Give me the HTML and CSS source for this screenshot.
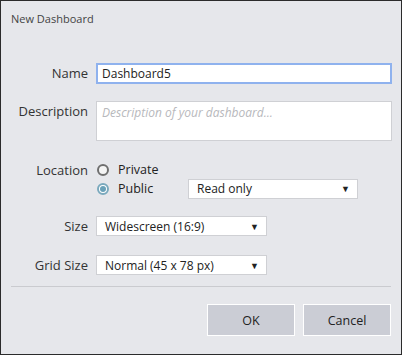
FILE: index.html
```html
<!DOCTYPE html>
<html lang="en">
<head>
    <meta charset="UTF-8">
    <title>New Dashboard</title>
    <link rel="stylesheet" href="styles.css">
</head>
<body>
    <div class="dialog">
        <div class="dialog-title">New Dashboard</div>

        <div class="form">
            <div class="row row-name">
                <label class="label">Name</label>
                <div class="field input focused">Dashboard5</div>
            </div>

            <div class="row row-desc">
                <label class="label">Description</label>
                <div class="field textarea placeholder">Description of your dashboard...</div>
            </div>

            <div class="row row-location">
                <label class="label">Location</label>
                <div class="location">
                    <div class="radio-line">
                        <span class="radio"></span>
                        <span class="radio-text">Private</span>
                    </div>
                    <div class="radio-line">
                        <span class="radio checked"></span>
                        <span class="radio-text">Public</span>
                        <div class="select select-access">
                            <span>Read only</span>
                            <span class="arrow">&#9660;</span>
                        </div>
                    </div>
                </div>
            </div>

            <div class="row row-size">
                <label class="label">Size</label>
                <div class="select select-small">
                    <span>Widescreen (16:9)</span>
                    <span class="arrow">&#9660;</span>
                </div>
            </div>

            <div class="row row-grid">
                <label class="label">Grid Size</label>
                <div class="select select-small">
                    <span>Normal (45 x 78 px)</span>
                    <span class="arrow">&#9660;</span>
                </div>
            </div>
        </div>

        <div class="separator"></div>

        <div class="buttons">
            <button class="btn">OK</button>
            <button class="btn">Cancel</button>
        </div>
    </div>
</body>
</html>
```

FILE: styles.css
```css
:root {
    --bg-color: #e6e7eb;
    --border-dark: #2b2b2b;
    --field-border: #cfd0d4;
    --focus-border: #8fb2ee;
    --text-color: #222;
    --button-color: #cbcdd5;
}

* {
    margin: 0;
    padding: 0;
    box-sizing: border-box;
    font-family: 'Open Sans', 'Noto Sans', Arial, sans-serif;
}

body {
    width: 402px;
    height: 355px;
    background: var(--bg-color);
    color: var(--text-color);
    font-size: 12px;
}

.dialog {
    height: 355px;
    border: 1px solid var(--border-dark);
    background: var(--bg-color);
    position: relative;
}

.dialog-title {
    padding: 10px 0 0 10px;
    height: 62px;
    font-size: 11px;
    color: #444;
}

.form {
    display: flex;
    flex-direction: column;
}

.row {
    display: flex;
    align-items: flex-start;
}

.label {
    width: 95px;
    padding-right: 8px;
    text-align: right;
    line-height: 21px;
    font-size: 13px;
    color: #333;
}

.field {
    background: #fff;
    border: 1px solid var(--field-border);
    width: 296px;
    padding: 0 5px;
    line-height: 19px;
}

.input {
    height: 21px;
}

.focused {
    border: 2px solid var(--focus-border);
    padding: 0 4px;
    line-height: 17px;
}

.textarea {
    height: 40px;
    padding-top: 1px;
}

.placeholder {
    color: #b7b8bc;
    font-style: italic;
}

.row-desc {
    margin-top: 17px;
}

.row-location {
    margin-top: 19px;
}

.location {
    display: flex;
    flex-direction: column;
}

.radio-line {
    display: flex;
    align-items: center;
    height: 19px;
}

.radio {
    width: 12px;
    height: 12px;
    border-radius: 50%;
    border: 2px solid #6f6f6f;
    background: #f4f4f4;
    margin: 0 9px 0 1px;
    position: relative;
}

.radio.checked {
    border-color: #7aa9bd;
    background: #fff;
}

.radio.checked::after {
    content: "";
    position: absolute;
    left: 1px;
    top: 1px;
    width: 6px;
    height: 6px;
    border-radius: 50%;
    background: #6aa1b8;
}

.radio-text {
    width: 70px;
    font-size: 12.5px;
}

.select {
    display: flex;
    justify-content: space-between;
    align-items: center;
    background: #fff;
    border: 1px solid var(--field-border);
    height: 20px;
    padding: 0 5px 0 8px;
}

.select-access {
    width: 170px;
    margin-left: 0;
}

.select-small {
    width: 171px;
}

.arrow {
    font-size: 9px;
    color: #222;
    padding-right: 2px;
}

.row-size {
    margin-top: 18px;
}

.row-grid {
    margin-top: 18px;
}

.separator {
    margin: 10px 10px 0 10px;
    height: 1px;
    background: #cacbcf;
}

.buttons {
    display: flex;
    justify-content: flex-end;
    gap: 8px;
    padding: 17px 10px 0 0;
}

.btn {
    width: 88px;
    height: 32px;
    background: var(--button-color);
    border: 1px solid #fff;
    font-size: 12.5px;
    color: #222;
    cursor: pointer;
}
```
